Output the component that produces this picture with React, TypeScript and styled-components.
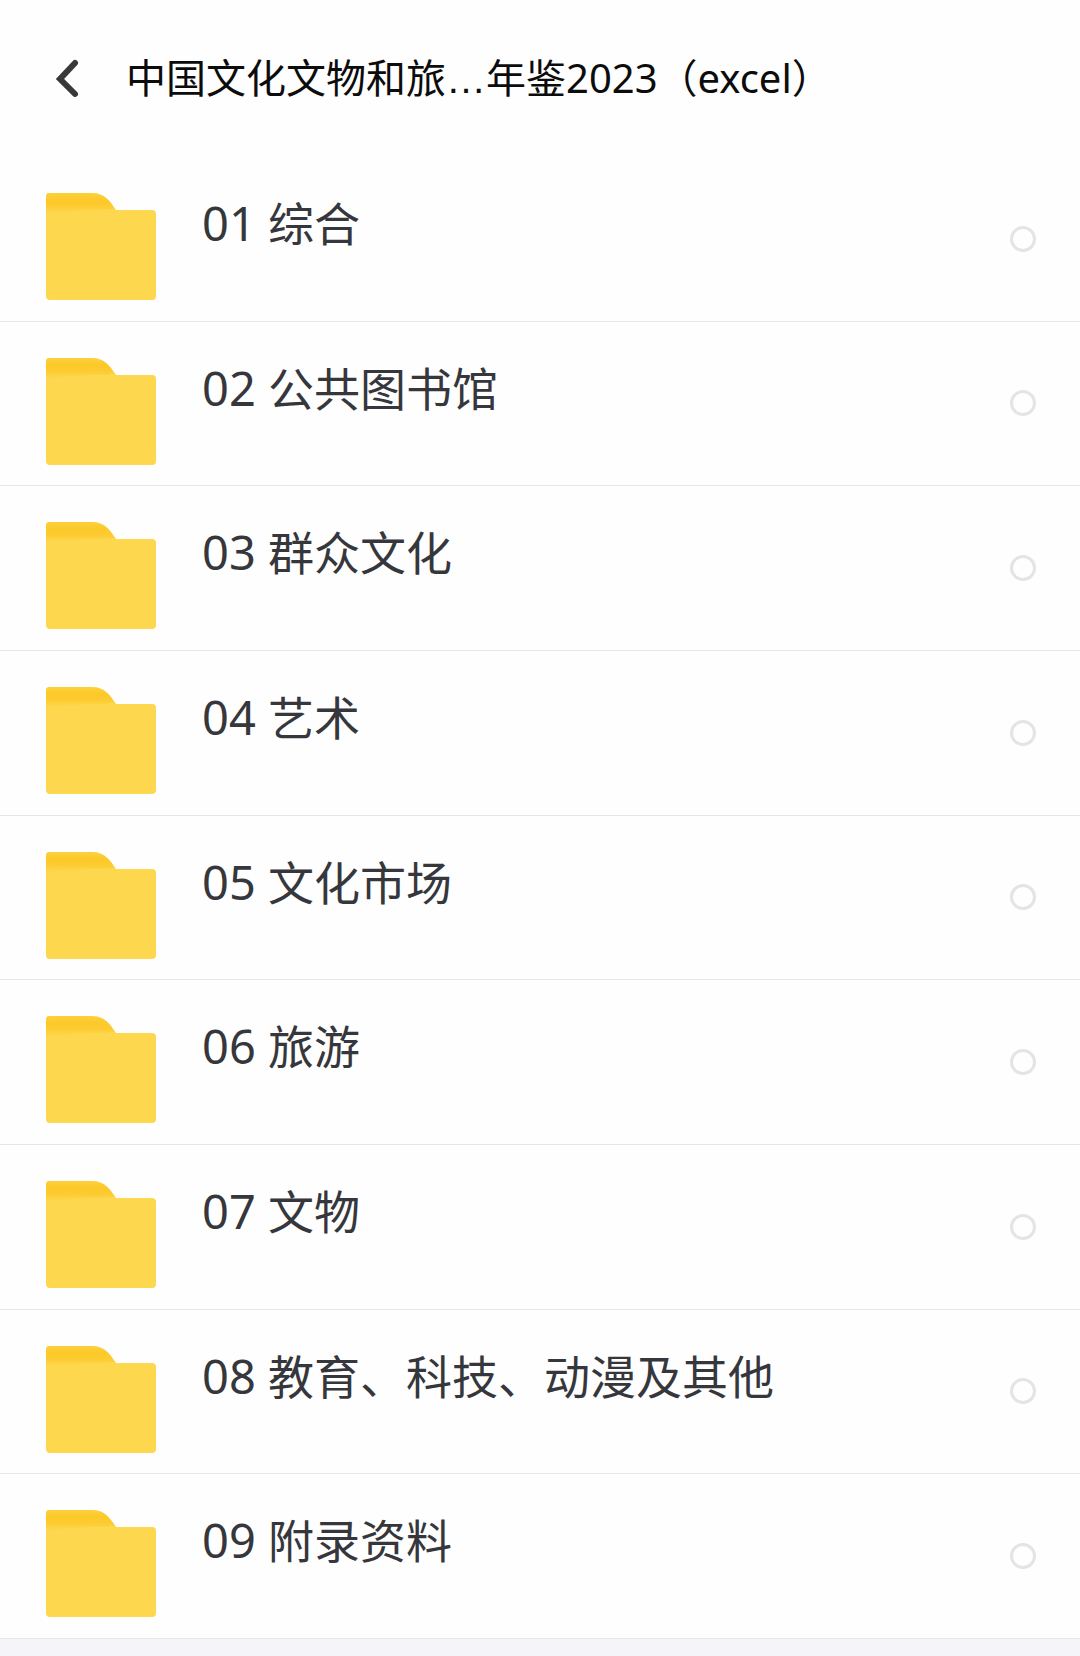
import React from "react";
import styled, { createGlobalStyle } from "styled-components";

const GlobalStyle = createGlobalStyle`
  * { box-sizing: border-box; }
  body {
    margin: 0;
    background: #f5f5f9;
    font-family: "Noto Sans", "Noto Sans CJK SC", sans-serif;
  }
`;

const Page = styled.main`
  display: flex;
  flex-direction: column;
  min-height: 100vh;
  padding-bottom: 17px;
`;

const Header = styled.header`
  display: flex;
  align-items: center;
  gap: 34px;
  height: 157px;
  padding: 0 44px;
  background: #fefefe;
`;

const BackButton = styled.button`
  display: flex;
  align-items: center;
  justify-content: center;
  width: 48px;
  height: 48px;
  padding: 0;
  border: 0;
  background: none;
  cursor: pointer;
`;

const Title = styled.h1`
  margin: 0;
  color: #0c0c0c;
  font-size: 40px;
  font-weight: 400;
  line-height: 60px;
  white-space: nowrap;
`;

const Ellipsis = styled.span`
  font-family: "Liberation Sans", sans-serif;
`;

const List = styled.ul`
  display: grid;
  flex: 1;
  grid-auto-rows: 1fr;
  margin: 0;
  padding: 0;
  list-style: none;
`;

const Row = styled.li`
  display: flex;
  align-items: center;
  min-height: 160px;
  padding-right: 44px;
  border-bottom: 1px solid #e6e6e8;
  background: #fefefe;
`;

const FolderLink = styled.a`
  display: flex;
  flex: 1;
  align-self: stretch;
  align-items: flex-start;
  gap: 46px;
  padding: 35px 0 0 46px;
  color: #36373c;
  text-decoration: none;
`;

const FolderName = styled.span`
  font-size: 46px;
  line-height: 62px;
`;

const FolderNumber = styled.span`
  font-size: 47px;
`;

const Picker = styled.input`
  appearance: none;
  width: 26px;
  height: 26px;
  margin: 0;
  border: 3px solid #e4e4e4;
  border-radius: 50%;
  background: #fefefe;
  cursor: pointer;

  &:checked {
    border-color: #fbcb2e;
    background: #fdd64b;
  }
`;

const folders = [
  { number: "01", name: "综合" },
  { number: "02", name: "公共图书馆" },
  { number: "03", name: "群众文化" },
  { number: "04", name: "艺术" },
  { number: "05", name: "文化市场" },
  { number: "06", name: "旅游" },
  { number: "07", name: "文物" },
  { number: "08", name: "教育、科技、动漫及其他" },
  { number: "09", name: "附录资料" },
];

function BackIcon() {
  return (
    <svg width="48" height="48" viewBox="0 0 48 48" fill="none" aria-hidden="true">
      <path
        d="M31 8 16 24 31 39"
        stroke="#39393b"
        strokeWidth="6"
        strokeLinecap="round"
        strokeLinejoin="miter"
      />
    </svg>
  );
}

function FolderIcon() {
  return (
    <svg width="110" height="108" viewBox="0 0 110 108" aria-hidden="true">
      <defs>
        <linearGradient id="folder-tab" x1="0" y1="0" x2="0" y2="1">
          <stop offset="0" stopColor="#fdd03c" />
          <stop offset="0.35" stopColor="#fcc92a" />
          <stop offset="0.65" stopColor="#fdcb30" />
          <stop offset="1" stopColor="#fdd74e" />
        </linearGradient>
      </defs>
      <path
        d="M0 16H60Q64 18 70 18H106Q110 18 110 22V104Q110 108 106 108H4Q0 108 0 104Z"
        fill="#fdd74e"
      />
      <path
        d="M0 4Q0 1 3 1H46C59 1 64 9 70 18C50 17 30 19 0 21Z"
        fill="url(#folder-tab)"
      />
    </svg>
  );
}

export default function App() {
  return (
    <>
      <GlobalStyle />
      <Page lang="zh-CN">
        <Header>
          <BackButton type="button" aria-label="返回">
            <BackIcon />
          </BackButton>
          <Title>
            中国文化文物和旅<Ellipsis>…</Ellipsis>年鉴2023（excel）
          </Title>
        </Header>
        <List>
          {folders.map(({ number, name }) => (
            <Row key={number}>
              <FolderLink href={`#${number}`}>
                <FolderIcon />
                <FolderName id={`folder-${number}`}>
                  <FolderNumber>{number} </FolderNumber>
                  {name}
                </FolderName>
              </FolderLink>
              <Picker type="checkbox" aria-labelledby={`folder-${number}`} />
            </Row>
          ))}
        </List>
      </Page>
    </>
  );
}
